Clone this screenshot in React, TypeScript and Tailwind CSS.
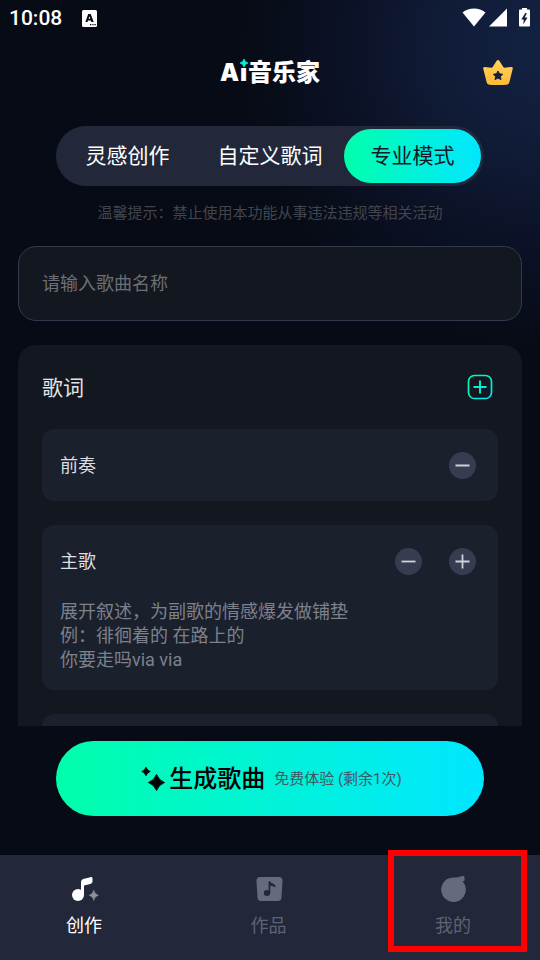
import type { ReactNode } from "react";

const tabs = ["灵感创作", "自定义歌词", "专业模式"];

const sections = [
  { title: "前奏", placeholder: "", canAdd: false },
  {
    title: "主歌",
    placeholder:
      "展开叙述，为副歌的情感爆发做铺垫\n例：徘徊着的 在路上的\n你要走吗via via",
    canAdd: true,
  },
];

const navItems = [
  {
    label: "创作",
    active: true,
    highlighted: false,
    icon: (
      <svg viewBox="0 0 30 28" className="w-[30px] h-7" aria-hidden="true">
        <circle cx="9" cy="20" r="6" fill="#fff" />
        <path
          d="M12 20V7.500c0-2 1-3.200 3-3.700l6.500-1.600c1.200-.3 2 .3 2 1.400v2.700c0 1.400-.8 2.300-2.200 2.700l-6.300 1.600V20z"
          fill="#fff"
        />
        <path
          d="M24.800 15c.9 3.100 1.700 4 4.700 5.300-3 1.300-3.800 2.200-4.700 5.300-.9-3.100-1.700-4-4.700-5.300 3-1.300 3.800-2.200 4.700-5.300z"
          fill="#8e919b"
          stroke="#8e919b"
          strokeWidth=".5"
        />
      </svg>
    ),
  },
  {
    label: "作品",
    active: false,
    highlighted: false,
    icon: (
      <svg viewBox="0 0 30 28" className="w-[30px] h-7" aria-hidden="true">
        <path
          d="M6 2h19q3.500 0 3.500 3.500l-1 17q-.3 3.500-3.500 3.500H7q-3.200 0-3.500-3.500l-1-17Q2.500 2 6 2z"
          fill="#656a7d"
        />
        <ellipse cx="13" cy="18" rx="3.200" ry="3" fill="#22283a" />
        <path
          d="M14.600 18V6.300h1.600c.6 1.900 2.200 2 3.800 2.900 1.300.8 1.800 1.700 1.500 3.300-1.400-1.200-3.200-1.600-5.200-1.700V18z"
          fill="#22283a"
        />
      </svg>
    ),
  },
  {
    label: "我的",
    active: false,
    highlighted: true,
    icon: (
      <svg viewBox="0 0 30 28" className="w-[30px] h-7" aria-hidden="true">
        <path
          d="M15 2.400c3.500 0 6-.3 8.800-1.200 1.700-.4 2.700.1 2.700 1.400v2.200c0 1.100-.8 1.700-1.900 1.600A12.300 12.300 0 1 1 15 2.400z"
          fill="#656a7d"
        />
      </svg>
    ),
  },
];

function Minus() {
  return (
    <svg viewBox="0 0 27 27" className="w-[27px] h-[27px]" aria-hidden="true">
      <path d="M6.500 13.500h14" stroke="#d0d1d6" strokeWidth="1.800" />
    </svg>
  );
}

function Plus() {
  return (
    <svg viewBox="0 0 27 27" className="w-[27px] h-[27px]" aria-hidden="true">
      <path d="M6.500 13.500h14M13.500 6.500v14" stroke="#d0d1d6" strokeWidth="1.800" />
    </svg>
  );
}

function RoundButton({ label, children }: { label: string; children: ReactNode }) {
  return (
    <button
      type="button"
      aria-label={label}
      className="w-[27px] h-[27px] rounded-full bg-[#373c50]"
    >
      {children}
    </button>
  );
}

function StatusBar() {
  return (
    <div className="flex h-9 shrink-0 items-center justify-between pl-[9px] pr-[10px]">
      <div className="flex items-center gap-5">
        <span className="text-[21px] leading-6 font-medium">10:08</span>
        <svg viewBox="0 0 15 17" className="w-[15px] h-[17px]" aria-hidden="true">
          <rect width="15" height="17" rx="1.500" fill="#fff" />
          <path
            d="M6.200 4h2.500l3 8H9.300l-.5-1.500H6L5.500 12H3.400zM7.400 6.200l-.8 2.600h1.700z"
            fill="#070b15"
          />
          <path d="M8 14h1.300v1.300H8zM10.300 14h1.300v1.300h-1.300zM12.500 14h1.300v1.300h-1.300z" fill="#070b15" />
        </svg>
      </div>
      <svg viewBox="0 0 68 20" className="w-[68px] h-5" aria-hidden="true">
        <path d="M.5 4.500C7-.9 17-.9 23.500 4.500L12 18.500z" fill="#fff" />
        <path d="M45 .5v18H27z" fill="#fff" />
        <path
          d="M60 0h5v1.500h2q1 0 1 1V17.500q0 1-1 1H58q-1 0-1-1V2.500q0-1 1-1h2z"
          fill="#fff"
        />
        <path d="M63.300 5l-4 6.500h2.500l-.6 5 4.300-7h-2.700l2-4.500z" fill="#121e39" />
      </svg>
    </div>
  );
}

function Header() {
  return (
    <header className="relative flex h-[74px] shrink-0 items-center justify-center">
      <h1
        aria-label="Ai音乐家"
        className="flex items-center gap-px text-2xl leading-9 font-black"
      >
        <span className="font-['Inter']">A</span>
        <span className="relative font-['Inter']">
          ı
          <svg
            viewBox="0 0 8 8"
            className="absolute top-1 left-0 w-2 h-2"
            aria-hidden="true"
          >
            <path
              d="M4 0Q4.800 3.200 8 4Q4.800 4.800 4 8Q3.200 4.800 0 4Q3.200 3.200 4 0z"
              fill="#00f0d8"
              stroke="#00f0d8"
              strokeWidth=".8"
            />
          </svg>
        </span>
        <span>音乐家</span>
      </h1>
      <button type="button" aria-label="会员" className="absolute right-[27px]">
        <svg viewBox="0 0 30 26" className="w-[30px] h-[26px]" aria-hidden="true">
          <defs>
            <linearGradient id="crown" x1="0" y1="0" x2="0" y2="1">
              <stop offset="0" stopColor="#ffd35c" />
              <stop offset="1" stopColor="#ffb936" />
            </linearGradient>
          </defs>
          <path
            d="M13.500 1q1.500-1.800 3 0L20.300 7q.5.900 1.500.800l6.500-.9q1.700 0 1.500 1.700L26.300 22.500q-.5 2-2.500 2.200-8.800.8-17.600 0-2-.2-2.500-2.200L.2 8.600Q0 6.900 1.700 6.900l6.500.9q1 .1 1.500-.8z"
            fill="url(#crown)"
          />
          <path
            d="M15 11l1.500 2.800 3.200.5-2.300 2.200.6 3.100-3-1.500-3 1.500.6-3.100-2.300-2.200 3.200-.5z"
            fill="#14203b"
            stroke="#14203b"
            strokeLinejoin="round"
          />
        </svg>
      </button>
    </header>
  );
}

export default function App() {
  return (
    <div className="flex h-screen flex-col overflow-hidden bg-[#070b15] bg-[radial-gradient(circle_300px_at_100%_5%,#132242_0%,#101b36_35%,#0b1226_65%,#070b15_100%)] font-['Roboto','Noto_Sans_CJK_SC',sans-serif] text-white">
      <StatusBar />
      <Header />

      <main className="flex min-h-0 flex-1 flex-col px-[18px] pt-4">
        <div
          role="tablist"
          className="mx-[38px] flex h-[60px] shrink-0 justify-between rounded-full bg-[#22283a] p-[3px]"
        >
          {tabs.map((tab) => (
            <button
              key={tab}
              type="button"
              role="tab"
              aria-selected={tab === "专业模式"}
              className="w-[137px] rounded-full text-[21px] leading-8 whitespace-nowrap aria-selected:bg-linear-to-r aria-selected:from-[#00ffaa] aria-selected:to-[#00e6ff] aria-selected:text-[#111827]"
            >
              {tab}
            </button>
          ))}
        </div>

        <p className="mt-[15px] text-center text-[15px] leading-6 text-[#42454d]">
          温馨提示：禁止使用本功能从事违法违规等相关活动
        </p>

        <input
          type="text"
          aria-label="歌曲名称"
          placeholder="请输入歌曲名称"
          className="mt-[21px] h-[75px] w-full shrink-0 rounded-[18px] border border-[#333a4e] bg-[#13171f] px-[23px] text-lg outline-none placeholder:text-[#6c6f76]"
        />

        <section
          aria-labelledby="lyrics-heading"
          className="mt-6 min-h-0 flex-1 overflow-hidden rounded-t-[18px] bg-[#13171f] px-6"
        >
          <div className="flex h-[84px] items-center justify-between pr-[5px]">
            <h2 id="lyrics-heading" className="pt-[2px] text-[21px] leading-8 text-[#e3e4e6]">
              歌词
            </h2>
            <button type="button" aria-label="添加段落">
              <svg viewBox="0 0 26 26" className="w-[26px] h-[26px]" fill="none" aria-hidden="true">
                <defs>
                  <linearGradient id="add" x1="0" y1="0" x2="26" y2="26" gradientUnits="userSpaceOnUse">
                    <stop stopColor="#00ffaa" />
                    <stop offset="1" stopColor="#00e6ff" />
                  </linearGradient>
                </defs>
                <rect x="1.500" y="1.500" width="23" height="23" rx="6" stroke="url(#add)" strokeWidth="1.700" />
                <path d="M6.500 13h13M13 6.500v13" stroke="url(#add)" strokeWidth="1.900" />
              </svg>
            </button>
          </div>

          <ul className="space-y-6">
            {sections.map((section) => (
              <li key={section.title} className="rounded-xl bg-[#1b202d] px-[18px]">
                <div className="flex h-[72px] items-center justify-between pr-1">
                  <h3 className="pt-[2px] text-lg leading-6 text-[#dddee1]">
                    {section.title}
                  </h3>
                  <div className="flex gap-[27px]">
                    <RoundButton label={`删除${section.title}`}>
                      <Minus />
                    </RoundButton>
                    {section.canAdd && (
                      <RoundButton label={`添加${section.title}`}>
                        <Plus />
                      </RoundButton>
                    )}
                  </div>
                </div>
                {section.placeholder && (
                  <div className="pt-[3px] pb-[18px]">
                    <textarea
                      rows={3}
                      aria-label={`${section.title}歌词`}
                      placeholder={section.placeholder}
                      className="block h-[72px] w-full resize-none overflow-hidden text-lg leading-6 outline-none placeholder:text-[#7d818c]"
                    />
                  </div>
                )}
              </li>
            ))}
            <li className="h-[72px] rounded-xl bg-[#1b202d]" />
          </ul>
        </section>

        <button
          type="button"
          className="mx-[38px] mt-[15px] mb-[39px] flex h-[75px] shrink-0 items-center justify-center rounded-full bg-linear-to-r from-[#00ffaa] to-[#00e6ff] pl-[3px] text-black"
        >
          <svg
            viewBox="0 0 24 26"
            className="mr-1 w-6 h-[26px]"
            stroke="#000"
            strokeWidth=".8"
            strokeLinejoin="round"
            aria-hidden="true"
          >
            <path d="M5 1.200q1.200 3.200 4.200 4.300Q6.200 6.600 5 9.800 3.800 6.600.8 5.500 3.800 4.400 5 1.200z" />
            <path d="M15.500 8.400q2.400 6 8.100 8.100-5.700 2.100-8.100 8.100-2.400-6-8.100-8.100 5.700-2.100 8.100-8.100z" />
          </svg>
          <span className="text-2xl font-medium">生成歌曲</span>
          <span className="ml-[9px] text-[15px] leading-6 text-[#3d5a63]">
            免费体验 (剩余1次)
          </span>
        </button>
      </main>

      <nav className="flex h-[105px] shrink-0 justify-between bg-[#22283a] pr-[69px] pl-[66px]">
        {navItems.map((item) => (
          <a
            key={item.label}
            href="#"
            aria-current={item.active ? "page" : undefined}
            className="relative flex flex-col items-center pt-5 text-lg leading-6 text-[#5e6375] aria-[current=page]:text-white"
          >
            {item.icon}
            <span className="mt-[11px]">{item.label}</span>
            {item.highlighted && (
              <span
                className="pointer-events-none absolute -top-[5px] -left-[47px] h-[102px] w-[139px] border-6 border-[#ff0000]"
                aria-hidden="true"
              />
            )}
          </a>
        ))}
      </nav>
    </div>
  );
}
